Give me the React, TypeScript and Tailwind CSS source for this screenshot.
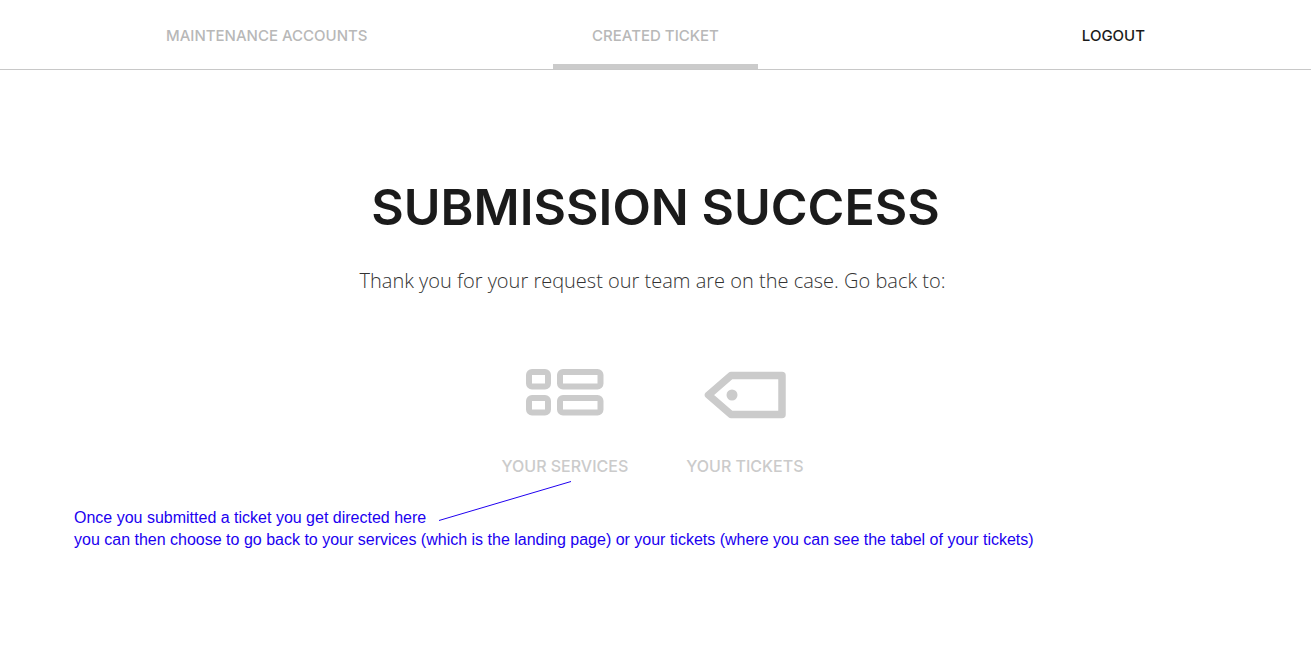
import type { ReactNode } from "react";

function NavLink({ href, children, active = false, className }: { href: string; children: ReactNode; active?: boolean; className: string }) {
  return (
    <a
      href={href}
      aria-current={active ? "page" : undefined}
      className={`flex items-center border-b-5 pt-2 text-[15px] leading-6 font-medium ${active ? "border-[#cbcbcb] px-[39px]" : "border-transparent"} ${className}`}
    >
      {children}
    </a>
  );
}

function ServicesIcon() {
  return (
    <svg width="78" height="50" viewBox="0 0 78 50" fill="none" stroke="#cbcbcb" strokeWidth="6" aria-hidden="true">
      <rect x="3" y="3" width="19" height="14.500" rx="3" />
      <rect x="34" y="3" width="40.500" height="14.500" rx="3" />
      <rect x="3" y="29" width="19" height="14.500" rx="3" />
      <rect x="34" y="29" width="40.500" height="14.500" rx="3" />
    </svg>
  );
}

function TicketIcon() {
  return (
    <svg width="82" height="50" viewBox="0 0 82 50" aria-hidden="true">
      <path d="M27 6.500H78V45.500H27L4.500 26Z" fill="none" stroke="#cbcbcb" strokeWidth="7.500" strokeLinejoin="round" />
      <circle cx="28" cy="26" r="5.500" fill="#cbcbcb" />
    </svg>
  );
}

function Choice({ href, icon, label }: { href: string; icon: ReactNode; label: string }) {
  return (
    <a href={href} className="flex flex-col items-center gap-[35px] text-base leading-6 font-medium text-[#cbcbcb]">
      {icon}
      {label}
    </a>
  );
}

export default function App() {
  return (
    <div className="bg-white font-['Inter',sans-serif]">
      <header className="border-b border-[#c8c8c8]">
        <nav className="grid h-[69px] grid-cols-[1fr_auto_1fr] px-[166px]">
          <NavLink href="#accounts" className="justify-self-start text-[#b8b8b8]">MAINTENANCE ACCOUNTS</NavLink>
          <NavLink href="#ticket" active className="text-[#b8b8b8]">CREATED TICKET</NavLink>
          <NavLink href="#logout" className="justify-self-end text-[#1b1b1b]">LOGOUT</NavLink>
        </nav>
      </header>
      <main>
        <h1 className="pt-[105px] text-center text-[50px] leading-16 font-semibold text-[#1b1b1b]">SUBMISSION SUCCESS</h1>
        <div className="flex flex-col items-center pt-[26px] pr-1.5">
          <p className="font-['Open_Sans',sans-serif] text-xl leading-8 font-light text-[#333333]">
            Thank you for your request our team are on the case. Go back to:
          </p>
          <div className="flex gap-[58px] pt-[72px]">
            <Choice href="#services" icon={<ServicesIcon />} label="YOUR SERVICES" />
            <Choice href="#tickets" icon={<TicketIcon />} label="YOUR TICKETS" />
          </div>
        </div>
        <div className="relative mt-[29px] ml-[74px] pb-10 font-['Liberation_Sans',Arial,sans-serif] text-base leading-[22px] text-[#2000f0]">
          <p>Once you submitted a ticket you get directed here</p>
          <p>you can then choose to go back to your services (which is the landing page) or your tickets (where you can see the tabel of your tickets)</p>
          <svg className="absolute -top-[26px] left-[364px]" width="134" height="41" viewBox="0 0 134 41" fill="none" stroke="#2000f0" aria-hidden="true">
            <path d="M1 39.500L133 0.500" />
          </svg>
        </div>
      </main>
    </div>
  );
}
